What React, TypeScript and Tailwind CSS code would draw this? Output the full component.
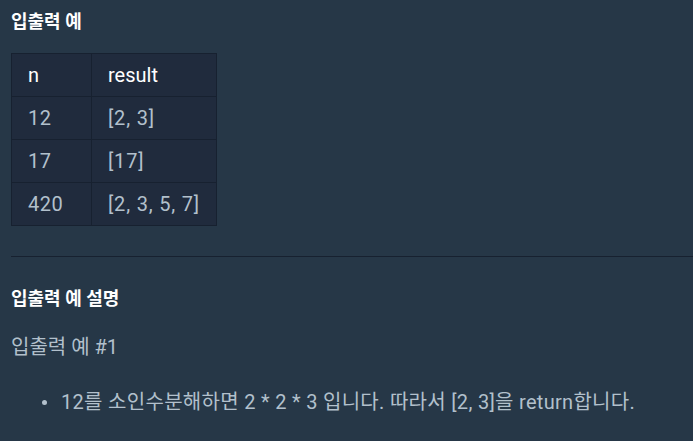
const rows = [
  { n: "12", result: "[2, 3]" },
  { n: "17", result: "[17]" },
  { n: "420", result: "[2, 3, 5, 7]" },
];

const font = { fontFamily: 'Roboto, "Noto Sans CJK KR", sans-serif' };

const cell = "h-[43px] border border-[#172130] px-4 text-left";

const App = () => {
  return (
    <div
      className="w-[693px] h-[441px] overflow-hidden bg-[#263747] pl-[11px] pt-[8px] text-[20px] leading-[32px] text-[#b2c0cc]"
      style={font}
    >
      {/* 입출력 예 */}
      <h5 className="text-[18px] leading-[28px] font-bold text-white">입출력 예</h5>
      <table className="mt-[17px] border-collapse bg-[#202b3d]">
        <thead>
          <tr>
            <th className={`w-[80px] font-normal text-white ${cell}`}>n</th>
            <th className={`w-[125px] font-normal text-white ${cell}`}>result</th>
          </tr>
        </thead>
        <tbody>
          {rows.map((r) => (
            <tr key={r.n}>
              <td className={`tracking-[0.5px] ${cell}`}>{r.n}</td>
              <td className={`tracking-[0.8px] ${cell}`}>{r.result}</td>
            </tr>
          ))}
        </tbody>
      </table>

      <div className="mt-[30px] h-px bg-[#172130]" />

      {/* 입출력 예 설명 */}
      <h5 className="mt-[28px] text-[18px] leading-[28px] font-bold text-white">
        입출력 예 설명
      </h5>
      <p className="mt-[18px]">입출력 예 #1</p>
      <div className="mt-[23px] flex items-center">
        <span className="ml-[31px] w-[5px] h-[5px] rounded-full bg-[#b2c0cc]" />
        <span className="ml-[14px] tracking-[0.3px]">
          12를 소인수분해하면 2 * 2 * 3 입니다. 따라서 [2, 3]을 return합니다.
        </span>
      </div>
    </div>
  );
};

export default App;
